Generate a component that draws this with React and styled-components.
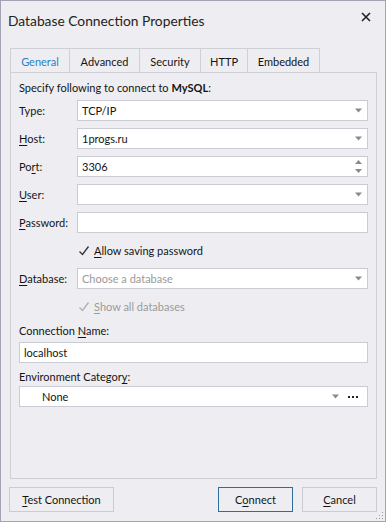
import React from "react";
import styled, { createGlobalStyle } from "styled-components";

const Global = createGlobalStyle`
  html, body { margin: 0; padding: 0; }
  body { font-family: Lato, "Noto Sans", sans-serif; font-size: 11px; color: #141414; }
`;

const Window = styled.div`
  width: 386px;
  height: 522px;
  box-sizing: border-box;
  border: 1px solid #a3a3b8;
  background: #eeeef2;
  display: flex;
  flex-direction: column;
  position: relative;
`;

const TitleBar = styled.div`
  height: 47px;
  display: flex;
  align-items: flex-start;
  justify-content: space-between;
  padding: 10px 0 0 7px;
  box-sizing: border-box;
`;

const Title = styled.div`
  font-size: 13.8px;
  color: #222;
  line-height: 20px;
`;

const Close = styled.div`
  width: 30px;
  height: 22px;
  margin-top: -5px;
  margin-right: 4px;
  display: flex;
  align-items: center;
  justify-content: center;
`;

const Tabs = styled.div`
  display: flex;
  padding-left: 9px;
`;

const Tab = styled.div`
  height: 25px;
  width: ${(p) => p.$w}px;
  box-sizing: border-box;
  display: flex;
  align-items: center;
  justify-content: center;
  border: 1px solid #cfcfd6;
  border-bottom: none;
  margin-left: -1px;
  background: #eeeef2;
  color: ${(p) => (p.$active ? "#2a7fc4" : "#141414")};
  &:first-child { margin-left: 0; }
`;

const Panel = styled.div`
  margin: -1px 8px 0 9px;
  height: 407px;
  box-sizing: border-box;
  border: 1px solid #cfcfd6;
  padding: 7px 8px 0 8px;
  display: flex;
  flex-direction: column;
`;

const Intro = styled.div`
  line-height: 16px;
  margin-bottom: 4px;
  b { font-weight: 700; }
`;

const Grid = styled.div`
  display: grid;
  grid-template-columns: 58px 1fr;
  row-gap: 7px;
  align-items: center;
`;

const Label = styled.div`
  line-height: 16px;
  white-space: nowrap;
  u { text-decoration: underline; text-underline-offset: 2px; }
`;

const Field = styled.div`
  height: 21px;
  box-sizing: border-box;
  background: #fff;
  border: 1px solid #cbcbd3;
  display: flex;
  align-items: center;
  padding: 0 4px 0 ${(p) => p.$indent || 4}px;
  color: ${(p) => (p.$placeholder ? "#9a9a9a" : "#141414")};
`;

const FieldText = styled.div`
  flex: 1;
  white-space: nowrap;
`;

const Check = styled.div`
  display: flex;
  align-items: center;
  gap: 3px;
  height: 21px;
  color: ${(p) => (p.$disabled ? "#9a9a9a" : "#141414")};
  u { text-decoration: underline; text-underline-offset: 2px; }
`;

const Stack = styled.div`
  display: flex;
  flex-direction: column;
  margin-top: ${(p) => p.$top}px;
`;

const StackLabel = styled(Label)`
  margin-bottom: ${(p) => p.$gap}px;
`;

const Footer = styled.div`
  display: flex;
  padding: 8px 8px 0 8px;
  gap: 9px;
`;

const Button = styled.div`
  height: 25px;
  box-sizing: border-box;
  width: ${(p) => p.$w}px;
  border: 1px solid ${(p) => (p.$primary ? "#2b6e9c" : "#cbcbd3")};
  background: #eeeef2;
  display: flex;
  align-items: center;
  justify-content: center;
  margin-left: ${(p) => (p.$push ? "auto" : "0")};
  u { text-decoration: underline; text-underline-offset: 2px; }
`;

const Grip = styled.svg`
  position: absolute;
  right: 1px;
  bottom: 1px;
`;

const Arrow = () => (
  <svg width="9" height="5" viewBox="0 0 9 5">
    <path d="M1 0.5 H8 L4.5 4.5 Z" fill="#8a8a8a" />
  </svg>
);

const Spin = () => (
  <svg width="9" height="15" viewBox="0 0 9 15">
    <path d="M1 5 H8 L4.5 1 Z" fill="#8a8a8a" />
    <path d="M1 10 H8 L4.5 14 Z" fill="#8a8a8a" />
  </svg>
);

const Tick = ({ color }) => (
  <svg width="14" height="14" viewBox="0 0 14 14">
    <path d="M2.5 7.5 L5.5 10.5 L11.5 2.5" fill="none" stroke={color} strokeWidth="1.3" />
  </svg>
);

const Combo = ({ children, placeholder }) => (
  <Field $placeholder={placeholder}>
    <FieldText>{children}</FieldText>
    <Arrow />
  </Field>
);

export default function App() {
  return (
    <>
      <Global />
      <Window>
        <TitleBar>
          <Title>Database Connection Properties</Title>
          <Close>
            <svg width="10" height="10" viewBox="0 0 10 10">
              <path d="M1 1 L9 9 M9 1 L1 9" stroke="#222" strokeWidth="1.6" />
            </svg>
          </Close>
        </TitleBar>
        <Tabs>
          <Tab $active $w={60}>General</Tab>
          <Tab $w={71}>Advanced</Tab>
          <Tab $w={62}>Security</Tab>
          <Tab $w={48}>HTTP</Tab>
          <Tab $w={73}>Embedded</Tab>
        </Tabs>
        <Panel>
          <Intro>Specify following to connect to <b>MySQL</b>:</Intro>
          <Grid>
            <Label>Type:</Label>
            <Combo>TCP/IP</Combo>
            <Label><u>H</u>ost:</Label>
            <Combo>1progs.ru</Combo>
            <Label>Po<u>r</u>t:</Label>
            <Field>
              <FieldText>3306</FieldText>
              <Spin />
            </Field>
            <Label><u>U</u>ser:</Label>
            <Combo></Combo>
            <Label><u>P</u>assword:</Label>
            <Field />
            <span />
            <Check>
              <Tick color="#333" />
              <span><u>A</u>llow saving password</span>
            </Check>
            <Label><u>D</u>atabase:</Label>
            <Combo placeholder>Choose a database</Combo>
            <span />
            <Check $disabled>
              <Tick color="#b0b0b0" />
              <span><u>S</u>how all databases</span>
            </Check>
          </Grid>
          <Stack $top={6}>
            <StackLabel $gap={3}>Connection <u>N</u>ame:</StackLabel>
            <Field><FieldText>localhost</FieldText></Field>
          </Stack>
          <Stack $top={6}>
            <StackLabel $gap={1}>Environment Categor<u>y</u>:</StackLabel>
            <Field $indent={22}>
              <FieldText>None</FieldText>
              <Arrow />
              <svg width="20" height="6" viewBox="0 0 20 6" style={{ marginLeft: 3 }}>
                <rect x="5" y="2" width="2" height="2" fill="#222" />
                <rect x="9" y="2" width="2" height="2" fill="#222" />
                <rect x="13" y="2" width="2" height="2" fill="#222" />
              </svg>
            </Field>
          </Stack>
        </Panel>
        <Footer>
          <Button $w={105}><span><u>T</u>est Connection</span></Button>
          <Button $w={75} $primary $push><span>C<u>o</u>nnect</span></Button>
          <Button $w={75}><span><u>C</u>ancel</span></Button>
        </Footer>
        <Grip width="8" height="8" viewBox="0 0 8 8">
          <rect x="6" y="0" width="1" height="1" fill="#999" />
          <rect x="3" y="3" width="1" height="1" fill="#999" />
          <rect x="6" y="3" width="1" height="1" fill="#999" />
          <rect x="0" y="6" width="1" height="1" fill="#999" />
          <rect x="3" y="6" width="1" height="1" fill="#999" />
          <rect x="6" y="6" width="1" height="1" fill="#999" />
        </Grip>
      </Window>
    </>
  );
}
